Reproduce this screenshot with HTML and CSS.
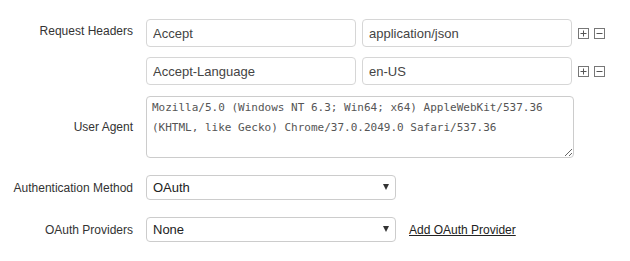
FILE: index.html
```html
<!DOCTYPE html>
<html>
<head>
<meta charset="utf-8">
<link rel="stylesheet" href="styles.css">
</head>
<body>
<form class="form">
  <div class="row row-headers">
    <label class="label label-top">Request Headers</label>
    <div class="field headers">
      <div class="header-row">
        <input class="input" type="text" value="Accept">
        <input class="input" type="text" value="application/json">
        <span class="icons">
          <svg class="icon" width="11" height="11" viewBox="0 0 11 11"><rect x="0.5" y="0.5" width="10" height="10" fill="#fff" stroke="#777"/><path d="M2.5 5.5h6M5.5 2.5v6" stroke="#555"/></svg>
          <svg class="icon" width="11" height="11" viewBox="0 0 11 11"><rect x="0.5" y="0.5" width="10" height="10" fill="#fff" stroke="#777"/><path d="M2.5 5.5h6" stroke="#555"/></svg>
        </span>
      </div>
      <div class="header-row">
        <input class="input" type="text" value="Accept-Language">
        <input class="input" type="text" value="en-US">
        <span class="icons">
          <svg class="icon" width="11" height="11" viewBox="0 0 11 11"><rect x="0.5" y="0.5" width="10" height="10" fill="#fff" stroke="#777"/><path d="M2.5 5.5h6M5.5 2.5v6" stroke="#555"/></svg>
          <svg class="icon" width="11" height="11" viewBox="0 0 11 11"><rect x="0.5" y="0.5" width="10" height="10" fill="#fff" stroke="#777"/><path d="M2.5 5.5h6" stroke="#555"/></svg>
        </span>
      </div>
    </div>
  </div>
  <div class="row row-ua">
    <label class="label">User Agent</label>
    <div class="field">
      <textarea class="textarea">Mozilla/5.0 (Windows NT 6.3; Win64; x64) AppleWebKit/537.36 (KHTML, like Gecko) Chrome/37.0.2049.0 Safari/537.36</textarea>
    </div>
  </div>
  <div class="row row-auth">
    <label class="label">Authentication Method</label>
    <div class="field">
      <span class="select-wrap">
        <select class="select"><option>OAuth</option></select>
      </span>
    </div>
  </div>
  <div class="row row-providers">
    <label class="label">OAuth Providers</label>
    <div class="field inline">
      <span class="select-wrap">
        <select class="select"><option>None</option></select>
      </span>
      <a class="link" href="#">Add OAuth Provider</a>
    </div>
  </div>
</form>
</body>
</html>
```

FILE: styles.css
```css
* { box-sizing: border-box; }

body {
  margin: 0;
  background: #fff;
  font-family: "Liberation Sans", Arial, sans-serif;
  font-size: 12px;
  color: #333;
}

.form {
  display: flex;
  flex-direction: column;
  padding-top: 19px;
}

.row {
  display: flex;
  align-items: center;
  column-gap: 13px;
}

.row-headers { align-items: flex-start; }
.row-ua { margin-top: 11px; }
.row-auth { margin-top: 17px; }
.row-providers { margin-top: 17px; }

.label {
  width: 133px;
  flex: none;
  text-align: right;
  color: #333;
  font-size: 12px;
  line-height: 16px;
}

.label-top { padding-top: 4px; }

.headers {
  display: flex;
  flex-direction: column;
  row-gap: 10px;
}

.header-row {
  display: flex;
  align-items: center;
  column-gap: 6px;
}

.input {
  width: 210px;
  height: 28px;
  border: 1px solid #d6d6d6;
  border-radius: 4px;
  padding: 0 6px;
  font-family: "Liberation Sans", Arial, sans-serif;
  font-size: 13px;
  color: #444;
  background: #fff;
  outline: none;
}

.icons {
  display: flex;
  column-gap: 5px;
}

.icon { display: block; }

.textarea {
  display: block;
  width: 428px;
  height: 62px;
  border: 1px solid #ccc;
  border-radius: 4px;
  padding: 1px 5px 0;
  font-family: "DejaVu Sans Mono", monospace;
  font-size: 11px;
  line-height: 20px;
  color: #555;
  resize: vertical;
  outline: none;
}

.select-wrap {
  position: relative;
  display: inline-block;
}

.select-wrap::after {
  content: "";
  position: absolute;
  right: 7px;
  top: 9px;
  border-left: 3px solid transparent;
  border-right: 3px solid transparent;
  border-top: 6px solid #333;
  pointer-events: none;
}

.select {
  display: block;
  width: 250px;
  height: 25px;
  border: 1px solid #ccc;
  border-radius: 4px;
  padding: 0 6px;
  font-family: "Liberation Sans", Arial, sans-serif;
  font-size: 13px;
  color: #222;
  background: #fff;
  -webkit-appearance: none;
  appearance: none;
  outline: none;
}

.inline {
  display: flex;
  align-items: center;
  column-gap: 13px;
}

.link {
  color: #222;
  font-size: 12px;
  text-decoration: underline;
}
```
